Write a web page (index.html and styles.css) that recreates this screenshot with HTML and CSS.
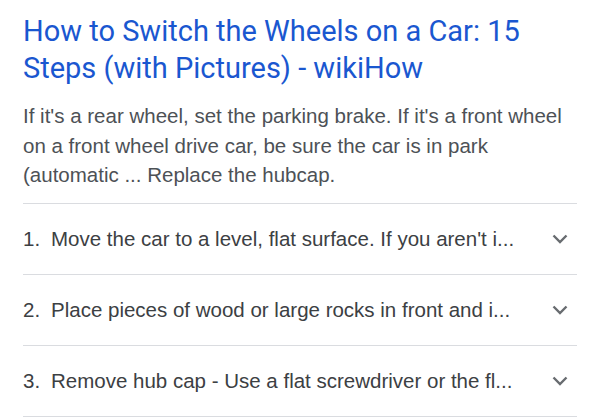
FILE: index.html
```html
<!DOCTYPE html>
<html lang="en">
<head>
    <meta charset="UTF-8">
    <meta name="viewport" content="width=device-width, initial-scale=1.0">
    <title>How to Switch the Wheels on a Car</title>
    <link rel="stylesheet" href="styles.css">
</head>
<body>
    <div class="result">
        <a class="title" href="#">How to Switch the Wheels on a Car: 15 Steps (with Pictures) - wikiHow</a>
        <p class="snippet">If it's a rear wheel, set the parking brake. If it's a front wheel on a front wheel drive car, be sure the car is in park (automatic ... Replace the hubcap.</p>
        <ul class="steps">
            <li class="step">
                <span class="num">1.</span>
                <span class="text">Move the car to a level, flat surface. If you aren't i...</span>
                <svg class="chevron" viewBox="0 0 16 10"><path d="M1.5 1.5 L8 8 L14.5 1.5"/></svg>
            </li>
            <li class="step">
                <span class="num">2.</span>
                <span class="text">Place pieces of wood or large rocks in front and i...</span>
                <svg class="chevron" viewBox="0 0 16 10"><path d="M1.5 1.5 L8 8 L14.5 1.5"/></svg>
            </li>
            <li class="step">
                <span class="num">3.</span>
                <span class="text">Remove hub cap - Use a flat screwdriver or the fl...</span>
                <svg class="chevron" viewBox="0 0 16 10"><path d="M1.5 1.5 L8 8 L14.5 1.5"/></svg>
            </li>
        </ul>
    </div>
</body>
</html>
```

FILE: styles.css
```css
body {
	margin: 0;
	background-color: #fff;
	font-family: "Liberation Sans", Arial, sans-serif;
}
.result {
	padding: 13px 23px 0 23px;
}
.title {
	display: block;
	font-family: Roboto, "Liberation Sans", sans-serif;
	font-size: 29px;
	line-height: 37px;
	color: #1a57d0;
	text-decoration: none;
}
.snippet {
	margin: 14px 0 0 0;
	padding-bottom: 13px;
	font-size: 20.5px;
	line-height: 29.5px;
	color: #4d5156;
	border-bottom: 1px solid #dadce0;
}
.steps {
	list-style: none;
	margin: 0;
	padding: 0;
}
.step {
	display: flex;
	align-items: center;
	height: 70px;
	border-bottom: 1px solid #dadce0;
	font-size: 20.5px;
	color: #3c4043;
}
.num {
	width: 28px;
}
.text {
	flex: 1;
	white-space: nowrap;
	overflow: hidden;
}
.chevron {
	width: 16px;
	height: 10px;
	margin-right: 9px;
	fill: none;
	stroke: #686c70;
	stroke-width: 2.4;
}
```
